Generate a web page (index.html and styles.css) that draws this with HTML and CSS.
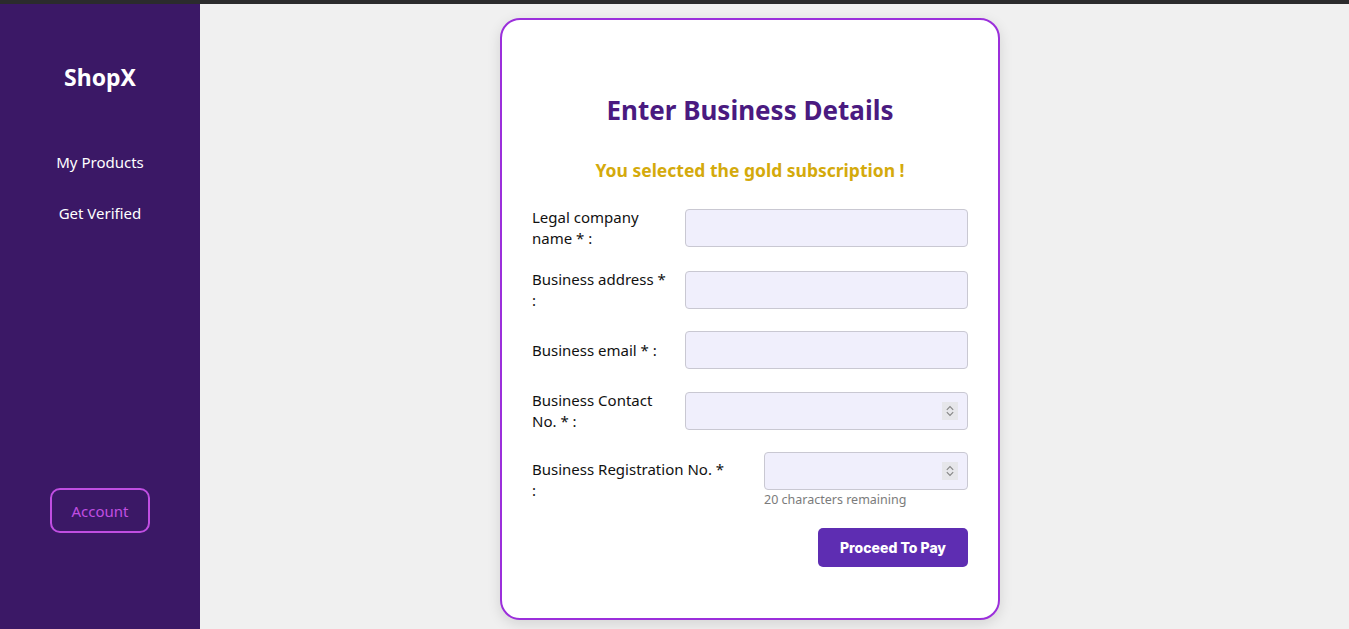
FILE: index.html
```html
<!DOCTYPE html>
<html>
<head>
<meta charset="utf-8">
<link rel="stylesheet" href="styles.css">
</head>
<body>
<div class="topbar"></div>
<div class="layout">
  <aside class="sidebar">
    <div class="brand">ShopX</div>
    <nav class="nav">
      <a class="nav-link">My Products</a>
      <a class="nav-link">Get Verified</a>
    </nav>
    <button class="account">Account</button>
  </aside>
  <main class="main">
    <section class="card">
      <h1 class="title">Enter Business Details</h1>
      <p class="subtitle">You selected the gold subscription !</p>
      <form class="form">
        <div class="row">
          <label class="label">Legal company name * :</label>
          <div class="field"><input class="input" type="text"></div>
        </div>
        <div class="row">
          <label class="label">Business address * :</label>
          <div class="field"><input class="input" type="text"></div>
        </div>
        <div class="row">
          <label class="label">Business email * :</label>
          <div class="field"><input class="input" type="text"></div>
        </div>
        <div class="row row-contact">
          <label class="label">Business Contact No. * :</label>
          <div class="field">
            <div class="num-wrap">
              <input class="input" type="text">
              <span class="spin"><svg width="10" height="14" viewBox="0 0 10 14"><path d="M1.8 5.8 L5 2.6 L8.2 5.8 M1.8 8.2 L5 11.4 L8.2 8.2" fill="none" stroke="#858585" stroke-width="1.1"/></svg></span>
            </div>
          </div>
        </div>
        <div class="row">
          <label class="label label-wide">Business Registration No. * :</label>
          <div class="field field-narrow">
            <div class="num-wrap">
              <input class="input" type="text">
              <span class="spin"><svg width="10" height="14" viewBox="0 0 10 14"><path d="M1.8 5.8 L5 2.6 L8.2 5.8 M1.8 8.2 L5 11.4 L8.2 8.2" fill="none" stroke="#858585" stroke-width="1.1"/></svg></span>
            </div>
            <div class="hint">20 characters remaining</div>
          </div>
        </div>
        <div class="actions">
          <button type="button" class="pay">Proceed To Pay</button>
        </div>
      </form>
    </section>
  </main>
</div>
</body>
</html>
```

FILE: styles.css
```css
* { box-sizing: border-box; }
html, body { margin: 0; padding: 0; height: 100%; }
body {
  font-family: "Noto Sans", "Open Sans", sans-serif;
  background: #f0f0f0;
  overflow: hidden;
}
.topbar { height: 4px; background: #2b2b2d; }
.layout { display: flex; height: 625px; }
.sidebar {
  width: 200px;
  flex-shrink: 0;
  background: #3b1866;
  display: flex;
  flex-direction: column;
  align-items: center;
  padding-top: 58px;
}
.brand {
  color: #ffffff;
  font-weight: 700;
  font-size: 23px;
  line-height: 30px;
}
.nav {
  display: flex;
  flex-direction: column;
  align-items: center;
  gap: 30px;
  margin-top: 60px;
}
.nav-link {
  color: #ffffff;
  font-size: 15px;
  line-height: 21px;
}
.account {
  margin-top: 264px;
  width: 100px;
  height: 45px;
  background: transparent;
  border: 2px solid #c04ee2;
  border-radius: 10px;
  color: #c04ee2;
  font-family: inherit;
  font-size: 15px;
}
.main {
  flex: 1;
  padding: 14px 0 0 300px;
}
.card {
  width: 500px;
  height: 602px;
  background: #ffffff;
  border: 2px solid #9b2fdb;
  border-radius: 20px;
  box-shadow: 0 4px 14px rgba(0, 0, 0, 0.12);
  padding: 72px 30px 0 30px;
}
.title {
  margin: 0;
  text-align: center;
  color: #4a1a80;
  font-size: 26px;
  font-weight: 700;
  line-height: 37px;
}
.subtitle {
  margin: 29px 0 0 0;
  text-align: center;
  color: #d4aa0c;
  font-size: 17.5px;
  font-weight: 700;
  line-height: 24px;
}
.form {
  margin-top: 25px;
  display: flex;
  flex-direction: column;
  gap: 20px;
}
.row {
  display: flex;
  align-items: center;
}
.row-contact { margin-top: 1px; }
.label {
  flex-shrink: 0;
  width: 153px;
  padding-right: 14px;
  font-size: 15px;
  line-height: 21px;
  color: #111111;
}
.label-wide { width: 232px; padding-right: 36px; }
.field { flex: 1; min-width: 0; }
.num-wrap { position: relative; }
.input {
  display: block;
  width: 100%;
  height: 38px;
  background: #f0effc;
  border: 1px solid #c9c8d2;
  border-radius: 4px;
  outline: none;
}
.spin {
  position: absolute;
  right: 10px;
  top: 10px;
  width: 16px;
  height: 18px;
  background: #e6e6ea;
  display: flex;
  align-items: center;
  justify-content: center;
}
.hint {
  margin-top: 2px;
  font-size: 12.5px;
  line-height: 16px;
  color: #7b7b7b;
}
.actions {
  display: flex;
  justify-content: flex-end;
}
.pay {
  width: 150px;
  height: 39px;
  background: #5e2db2;
  color: #ffffff;
  border: none;
  border-radius: 5px;
  font-family: "Inter", "Noto Sans", sans-serif;
  font-weight: 800;
  font-size: 14px;
}
```
